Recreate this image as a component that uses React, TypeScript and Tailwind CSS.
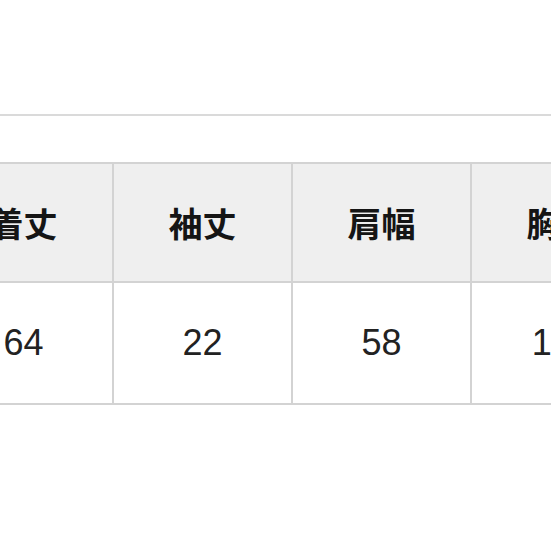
const headers = ["着丈", "袖丈", "肩幅", "胸囲"];
const values = ["64", "22", "58", "116"];

export default function App() {
  return (
    <div className="w-[551px] h-[551px] overflow-hidden bg-white">
      <div className="h-[114px]" />
      <div className="h-[2px] bg-[#dadada]" />
      <div className="h-[46px]" />
      <div className="-ml-[67px] w-max">
        <div className="grid grid-cols-[repeat(4,177px)] gap-[2px] bg-[#d3d3d3] p-[2px]">
          {headers.map((h) => (
            <div
              key={h}
              className="h-[117px] bg-[#efefef] flex items-center justify-center text-[34px] font-bold text-[#151515]"
              style={{ fontFamily: '"Noto Sans CJK JP", "Noto Sans", sans-serif' }}
            >
              {h}
            </div>
          ))}
          {values.map((v, i) => (
            <div
              key={i}
              className="h-[120px] bg-white flex items-center justify-center text-[36px] text-[#222]"
              style={{ fontFamily: '"Liberation Sans", Arial, sans-serif' }}
            >
              {v}
            </div>
          ))}
        </div>
      </div>
    </div>
  );
}
